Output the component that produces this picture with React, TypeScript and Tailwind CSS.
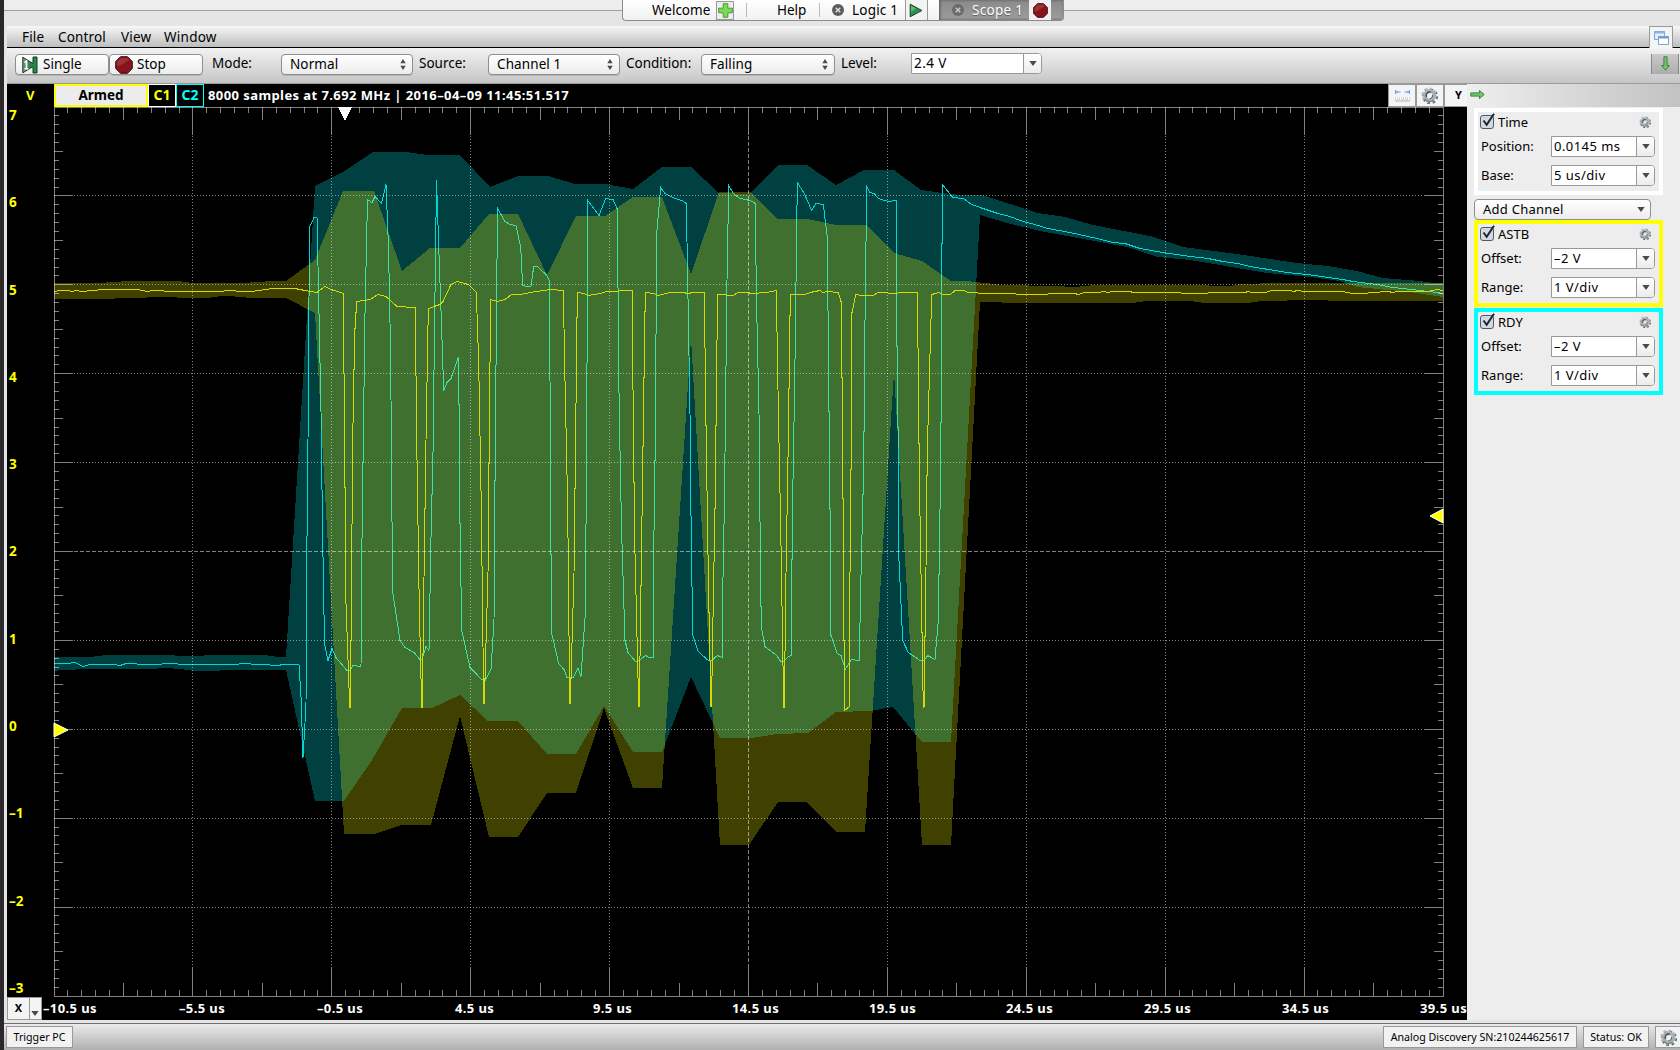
import type { ReactNode } from 'react';
import clsx from 'clsx';

const PLOT = { left: 54, top: 107, width: 1389, height: 889 };
const RIGHT = PLOT.left + PLOT.width;
const BOTTOM = PLOT.top + PLOT.height;

const rdyBand =
  '54,657 90,657 106,655 157,655 193,656 215,655 265,655 278,657 286,657 315,186 343,172 373,152 406,152 428,155 460,155 490,187 518,176 548,176 575,184 605,184 633,189 662,167 691,167 719,193 750,194 778,165 807,165 836,185 864,170 894,170 921,190 943,193 960,195 982,195 1038,213 1065,217 1093,225 1150,236 1183,247 1237,254 1297,263 1328,266 1357,271 1383,278 1420,281 1433,283 1443,283 ' +
  '1443,297 1410,292 1357,287 1340,281 1310,277 1267,273 1190,260 1157,257 1127,247 1040,231 1007,223 980,215 951,742 922,742 893,707 870,711 836,712 808,733 777,734 752,738 720,738 691,677 662,752 633,752 604,706 576,754 547,754 518,721 488,721 460,695 432,708 402,708 372,760 344,801 315,801 286,670 244,670 195,671 180,669 165,668 150,669 90,669 62,670 54,671';

const astbBand =
  '54,283 99,283 128,281 178,281 193,283 243,283 272,281 286,281 315,260 343,191 374,191 402,271 430,248 460,248 489,214 518,214 547,275 576,216 605,216 633,197 662,197 691,274 719,192 750,192 778,219 808,219 836,225 866,225 894,253 922,261 951,281 966,281 985,283 1003,285 1055,286 1075,287 1095,285 1188,285 1230,286 1240,284 1280,283 1443,283 ' +
  '1443,301 1342,301 1313,300 1262,301 1247,303 1205,303 1190,301 1147,301 1132,303 1024,303 980,302 951,845 922,845 894,372 865,832 836,832 807,802 778,802 749,845 720,845 691,338 662,788 633,788 604,708 576,793 547,793 518,837 489,837 460,716 431,825 401,825 374,834 344,834 315,313 286,298 251,298 230,296 222,296 207,298 190,298 164,297 130,298 99,299 54,299';

const rdyTrace =
  '54,663 67,663 75,662 83,666 90,664 114,664 120,665 126,663 148,664 176,663 180,664 236,664 242,663 279,665 282,664 299,664 301,696 303,757 306,705 306.5,585 308,440 309.5,227 314,217 317,217 319,313 321,411 322.5,527 324.5,643 328,660 332,648 336,657 347,670 350,670 353,665 361,666 361.7,561 363.3,440 365,313 367.5,199 372,202 375,196 381.5,203 386,184 388.5,247 390.5,347 391.5,450 392.5,590 400,640 405,647 414,652 420,659 422,659 426,646 429,650 431,537 433,453 434.5,330 436.5,180 439.3,263 441.7,330 443.7,390 447,382 451,378 458.3,357 459.3,423 460,523 461.7,630 470,667 481.7,679 485,680 491,669 494,620 495.3,440 497.5,208 505,221 510,224 516,225 520.7,247 522.7,285 526.7,286 531,286 533.7,266 537.3,266 546,274 549.5,280 550.7,517 551.7,633 558.7,663 564,669 567,677 573,677 578,668 581,676 585.3,613 586.7,440 587.7,200 599,215 605.7,198 613,199 617.5,209 618.5,363 620,450 621.5,527 625,640 628,652 635.7,661 639,660 645.7,655 649,657 653.3,657 653.7,552 655.3,440 656.7,233 660.7,187 665,193 675,198 682,200 686.3,203 687.7,280 690,413 690.7,493 692.7,635 698.3,651 708.3,660 712,660 717.3,655 722.3,657 723,577 724.5,497 727,280 728.7,185 733.3,193 740,198 750,200 755.3,203 756.3,290 759,413 760.3,553 761.3,627 765,646 776.7,655 780.7,661 784,661 787.3,657 791.3,655 792.3,520 794.7,383 797.3,182 804.3,193 811.7,210 815.7,203 823.3,204 827.3,237 828.7,380 830.3,537 831,635 837.3,653 841,655 845.3,669 851.3,659 859.3,660 860.7,587 863.7,467 865,320 866.7,186 870,192 874,193 878.3,198 888.3,201 896.3,200 896.7,320 898.3,450 899,560 902.7,640 908.3,652 920,660 924,660 927.7,655 935,659 938.3,620 940,510 941.3,397 942.3,184 952.7,197 963.3,198 971.7,204 980,207 998,213 1010,216 1020,220 1038,225 1048,228 1070,232 1097,238 1113,242 1125,243 1140,248 1163,252 1190,256 1208,258 1223,261 1238,263 1250,266 1287,272 1307,274 1343,279 1353,281 1377,284 1393,287 1420,290 1437,292 1443,293';

const astbTrace =
  '54,291 60,290 68,290 72,291 76,290 82,291 104,289 137,289 148,291 152,290 176,291 216,291 232,290 240,291 252,291 272,288 295,288 305,290 317,292 325,286 331,289 343.3,293 344.7,450 346,603 349.7,707 350.3,707 351.3,613 352.7,440 354.7,333 356.7,301 370,299 378,294 386,296 397,306 415.3,307 416.7,440 419.3,607 421.7,707 422.3,707 424,577 426,440 428.3,308 440,304 443,301 451,284 457.3,281 468.3,284 476.3,292 478.7,363 481.3,507 483.7,703 484.3,703 488,573 489.7,390 490.7,299 497.3,301 505,299 511.7,294 521,294 530,292 550,289 563.3,290 565,380 567.7,507 569.7,703 570.3,703 574,573 575.7,430 577.3,292 584,293 588.3,295 600,293 606.7,291 632.3,290 633.3,430 635,553 638.7,706 639.3,706 641.7,537 644.3,357 645.3,292 654,293 658.3,295 670,292 683,292 688,293 693,292 704.3,292 706.3,447 708.7,597 711,706 711.5,706 713.3,600 715.3,493 716.7,360 717.7,294 725,294 727,295 733,295 738,292 747,292 752,293 767,292 776.3,290 778.3,407 780.7,527 783.7,707 784.3,707 786,573 788.3,440 790.3,294 805,294 810,292 820,290 823,292 827,291 838.3,292 841.3,302 842.7,450 843.7,607 844.7,710 849.3,706 850,573 851.3,440 852,312 855.7,294 863,295 873,295 878,292 897,293 899,292 917.3,292 918.3,370 919.3,473 923.3,707 924,707 926,567 927.3,450 931.7,294 939,292 943,294 950.7,294 955,290 964,290 968,292 987,293 1010,293 1022,294 1075,293 1078,294 1085,292 1098,292 1104,291 1108,292 1112,291 1130,291 1133,292 1178,292 1184,293 1205,293 1212,292 1245,292 1248,291 1252,292 1266,292 1271,290 1290,290 1294,291 1297,290 1305,291 1343,291 1352,293 1365,293 1372,292 1388,291 1393,292 1397,291 1428,291 1437,289 1443,290';

const voltLabels = ['7', '6', '5', '4', '3', '2', '1', '0', '–1', '–2', '–3'];
const timeLabels = ['–10.5', '–5.5', '–0.5', '4.5', '9.5', '14.5', '19.5', '24.5', '29.5', '34.5', '39.5'];

const tick = (index: number, minor: number, middle: number, major: number) => {
  if (index % 10 === 0) return major;
  return index % 5 === 0 ? middle : minor;
};

const Graticule = () => {
  let ticks = '';
  for (let i = 1; i < 100; i++) {
    const x = Math.floor(PLOT.left + (i * PLOT.width) / 100) + 0.5;
    const y = Math.floor(PLOT.top + (i * PLOT.height) / 100) + 0.5;
    const tall = tick(i, 6, 13, 28);
    const wide = tick(i, 5, 9, 19);
    ticks += `M${x} ${PLOT.top}v${tall}M${x} ${BOTTOM}v${-tall}`;
    ticks += `M${PLOT.left} ${y}h${wide}M${RIGHT} ${y}h${-wide}`;
  }
  const lines = [1, 2, 3, 4, 5, 6, 7, 8, 9];
  return (
    <g fill="none" stroke="#ffffff" strokeOpacity={0.5}>
      <path d={ticks} />
      <rect x={PLOT.left + 0.5} y={PLOT.top + 0.5} width={PLOT.width} height={PLOT.height} />
      {lines.map((n) => {
        const x = Math.floor(PLOT.left + (n * PLOT.width) / 10) + 0.5;
        const y = Math.floor(PLOT.top + (n * PLOT.height) / 10) + 0.5;
        const dash = n === 5 ? '4 2' : '1 2';
        return (
          <g key={n} strokeDasharray={dash}>
            <line x1={x} x2={x} y1={PLOT.top + 29} y2={BOTTOM - 28} />
            <line x1={PLOT.left + 20} x2={RIGHT - 19} y1={y} y2={y} />
          </g>
        );
      })}
    </g>
  );
};

const Waveforms = () => (
  <svg className="block" width="1460" height="890" viewBox="7 107 1460 890" shapeRendering="crispEdges">
    <polygon points={rdyBand} fill="#00ffff" fillOpacity={0.25} />
    <polyline points={rdyTrace} fill="none" stroke="#00d8d8" transform="translate(0 .5)" />
    <polygon points={astbBand} fill="#ffff00" fillOpacity={0.25} />
    <polyline points={astbTrace} fill="none" stroke="#d6dc00" transform="translate(0 .5)" />
    <Graticule />
    <polygon points="338,107 352,107 345,121" fill="#ffffff" />
    <g shapeRendering="auto">
      <polygon points="54,723 68,730 54,737" fill="#ffff00" stroke="#ffffff" strokeWidth="1" />
      <polygon points="1443,509 1430,516 1443,523" fill="#ffff00" stroke="#ffffff" strokeWidth="1" />
    </g>
  </svg>
);

const Gear = ({ size }: { size: number }) => (
  <svg width={size} height={size} viewBox="0 0 16 16" fill="none">
    <circle cx="8.6" cy="8.8" r="6.400" stroke="#6c7478" strokeWidth="2.200" strokeDasharray="2.600 2.430" />
    <circle cx="7.600" cy="7.600" r="6.200" stroke="#b4babd" strokeWidth="2" strokeDasharray="2.600 2.270" />
    <circle cx="8" cy="8" r="4.400" stroke="#a8b0b4" strokeWidth="3.200" />
    <path d="M5.300 9.400A3 3 0 0 1 9.200 5.200" stroke="#4b5458" strokeWidth="1.500" />
    <path d="M10.900 7.500A2.900 2.900 0 0 1 8 10.900" stroke="#5f686c" strokeWidth="1" />
    <path d="M3.500 11.500A5.600 5.600 0 0 0 12 12" stroke="#6c7478" strokeWidth="1" />
  </svg>
);

const StopSign = ({ size }: { size: number }) => (
  <svg width={size} height={size} viewBox="0 0 18 18">
    <path d="M5.5.7h7l4.800 4.800v7l-4.800 4.800h-7L.7 12.500v-7z" fill="#8a1219" stroke="#35100f" />
    <path d="M5.900 1.900h6.200l2 2.100-10.300 6.600-1.900-1.600V6z" fill="#a8474b" opacity="0.6" />
  </svg>
);

const PlayIcon = () => (
  <svg width="14" height="15" viewBox="0 0 14 15">
    <path d="M1.200 1.200 12.800 7.500 1.200 13.800z" fill="#27944a" stroke="#163c22" />
    <path d="M2 2.500 7 5.300 2 9z" fill="#8cc79c" opacity="0.6" />
  </svg>
);

const SingleIcon = () => (
  <svg width="16" height="18" viewBox="0 0 16 18">
    <path d="M.8 1.200 11 7.500V1h4v16h-4v-6.500L.8 16.800z" fill="#27894a" stroke="#173822" />
    <path d="M1.300 2 6 5v8l-4.700 3z" fill="#6e8f76" />
    <path d="M2.500 6.500 4.500 5v7.500M2.500 12.700h4" stroke="#ffffff" strokeWidth="1.600" fill="none" />
  </svg>
);

const CloseDot = () => (
  <svg width="12" height="12" viewBox="0 0 12 12">
    <circle cx="6" cy="6" r="6" fill="#5c5c5c" />
    <path d="m3.700 3.700 4.600 4.600m0-4.600-4.600 4.600" stroke="#e6e6e6" strokeWidth="1.300" />
  </svg>
);

const GreenArrow = ({ down }: { down?: boolean }) => (
  <svg width="15" height="15" viewBox="0 0 15 15" className={clsx(down && 'rotate-90')}>
    <path d="M.8 5.900h8.700V3.500L14.200 7.500 9.500 11.500V9.100H.8z" fill="#74c46a" stroke="#3a8440" />
  </svg>
);

const Caret = () => (
  <svg width="8" height="5" viewBox="0 0 8 5">
    <path d="M.3 0h7.400L4 5z" fill="#4a4a4a" />
  </svg>
);

const Steppers = () => (
  <svg width="6" height="11" viewBox="0 0 6 11" className="ml-auto">
    <path d="M3 0 5.700 4.200H.3zM3 11 5.700 6.800H.3z" fill="#4a4a4a" />
  </svg>
);

const Select = ({ value, className }: { value: string; className: string }) => (
  <div
    className={clsx(
      'flex h-[21px] items-center rounded-[4px] border border-[#8e8e8e] bg-gradient-to-b from-white to-[#ececec] pr-[6px] pl-2 shadow-[0_1px_0_#b4b4b4]',
      className
    )}
  >
    <span className="pb-px tracking-[0.1px]">{value}</span>
    <Steppers />
  </div>
);

const Combo = ({ value, className }: { value: string; className: string }) => (
  <div className={clsx('flex h-[21px] rounded-r-[4px] border border-[#999999] bg-white', className)}>
    <span className="flex flex-1 items-center pb-px pl-[2px] tracking-[0.45px] whitespace-nowrap">{value}</span>
    <span className="flex w-[18px] items-center justify-center rounded-r-[3px] border-l border-[#999999] bg-gradient-to-b from-white to-[#ececec]">
      <Caret />
    </span>
  </div>
);

const Tabs = () => (
  <div className="absolute top-0 left-[622px] flex h-[21px] w-[442px] items-center overflow-hidden rounded-b-[4px] border border-t-0 border-[#8c8c8c] bg-gradient-to-b from-white to-[#f1f1f1]">
    <span className="ml-[29px] w-[64px]">Welcome</span>
    <span className="flex h-[19px] w-[18px] items-center justify-center border border-[#999999] bg-[#ededed]">
      <svg width="15" height="15" viewBox="0 0 15 15">
        <path d="M5.200.7h4.600v4.500h4.500v4.600H9.800v4.500H5.200V9.800H.7V5.200h4.500z" fill="#7ed957" stroke="#4a9a35" />
      </svg>
    </span>
    <span className="ml-3 h-[14px] w-px bg-[#bbbbbb]" />
    <span className="ml-[30px] w-[42px]">Help</span>
    <span className="h-[14px] w-px bg-[#bbbbbb]" />
    <span className="ml-3">
      <CloseDot />
    </span>
    <span className="ml-2 w-[53px] tracking-[0.2px] whitespace-nowrap">Logic 1</span>
    <span className="flex h-full w-[23px] items-center justify-center border-x border-[#999999] bg-[#f2f2f2] pr-px">
      <PlayIcon />
    </span>
    <div className="ml-auto flex h-full w-[124px] items-center bg-gradient-to-b from-[#8a8a8a] to-[#9c9c9c] shadow-[inset_1px_0_3px_#555555]">
      <span className="ml-[13px] opacity-70">
        <CloseDot />
      </span>
      <span className="ml-2 w-[57px] tracking-[0.3px] whitespace-nowrap text-white [text-shadow:0_1px_1px_#555555]">
        Scope 1
      </span>
      <span className="flex h-full w-[22px] items-center justify-center bg-[#f0f0f0]">
        <StopSign size={15} />
      </span>
    </div>
  </div>
);

const MenuBar = () => (
  <div className="ml-[7px] flex h-[22px] items-center border-b border-black bg-gradient-to-b from-[#f8f8f8] to-[#bdbdbd] pl-[15px] tracking-[0.15px]">
    <span className="w-9">File</span>
    <span className="w-[63px]">Control</span>
    <span className="w-[43px]">View</span>
    <span className="tracking-[0.25px]">Window</span>
    <span className="mt-px mr-[7px] ml-auto flex h-[22px] w-6 items-center justify-center border border-b-0 border-[#999999] bg-[#f4f4f4]">
      <svg width="15" height="14" viewBox="0 0 15 14">
        <path d="M.5.5h10v8H.5z" fill="#e4edf8" stroke="#7ba3d6" />
        <path d="M.5.5h10v2H.5z" fill="#8db4e4" />
        <path d="M4.500 5.500h10v8h-10z" fill="#ffffff" stroke="#7ba3d6" />
        <path d="M4.500 5.500h10v2h-10z" fill="#6d9cd8" />
      </svg>
    </span>
  </div>
);

const ToolBar = () => (
  <div className="ml-[7px] flex h-9 items-start border-b border-[#9a9a9a] bg-gradient-to-b from-[#f2f2f2] to-[#c6c6c6] pt-[6px] pl-2">
    <div className="flex h-[21px] w-[94px] items-center rounded-[4px] border border-[#8e8e8e] bg-gradient-to-b from-white to-[#ececec] pl-[6px] shadow-[0_1px_0_#b4b4b4]">
      <SingleIcon />
      <span className="ml-[5px] pb-px">Single</span>
    </div>
    <div className="flex h-[21px] w-[94px] items-center rounded-[4px] border border-[#8e8e8e] bg-gradient-to-b from-white to-[#ececec] pl-[5px] shadow-[0_1px_0_#b4b4b4]">
      <StopSign size={18} />
      <span className="ml-1 pb-px">Stop</span>
    </div>
    <span className="-mt-px ml-[9px] w-[69px]">Mode:</span>
    <Select value="Normal" className="w-[132px]" />
    <span className="-mt-px ml-[6px] w-[69px]">Source:</span>
    <Select value="Channel 1" className="w-[132px]" />
    <span className="-mt-px ml-[6px] w-[75px]">Condition:</span>
    <Select value="Falling" className="w-[134px]" />
    <span className="-mt-px ml-[6px] w-[70px]">Level:</span>
    <Combo value="2.4 V" className="-mt-px w-[131px]" />
    <span className="mr-px ml-auto flex h-5 w-[28px] items-center justify-center border-x border-[#888888] bg-gradient-to-b from-[#c9c9c9] to-[#adadad] pb-[2px]">
      <GreenArrow down />
    </span>
  </div>
);

const PlotHeader = () => (
  <div className="flex h-[23px] items-center font-bold">
    <span className="w-[47px] pb-px pl-[19px] text-[13px] text-[#ffff00]">V</span>
    <span className="flex h-full w-[94px] items-center justify-center border-2 border-[#ffff00] bg-[#ececec] pb-px text-[13.5px] text-black">
      Armed
    </span>
    <span className="flex h-full w-7 items-center justify-center border border-white pb-px text-[14px] text-[#ffff00]">
      C1
    </span>
    <span className="flex h-full w-7 items-center justify-center border border-[#00ffff] pb-px text-[14px] text-[#00ffff]">
      C2
    </span>
    <span className="ml-1 pb-[2px] text-[13px] tracking-[0.42px] whitespace-nowrap text-white">
      8000 samples at 7.692 MHz | 2016–04–09 11:45:51.517
    </span>
    <span className="ml-auto flex h-full w-7 items-center justify-center border border-[#999999] bg-[#f4f4f4]">
      <svg width="15" height="12" viewBox="0 0 15 12">
        <path d="M.5 0v4M14.500 0v4M1 2h4.500M9.500 2H14" stroke="#6a9fe8" />
        <path d="M2.500.5v3L.8 2zM12.500.5v3L14.200 2z" fill="#6a9fe8" />
        <path d="M0 7h15v5H0z" fill="#d4d4d4" />
        <path d="M1.500 7v3M3.500 7v2M5.500 7v3M7.500 7v2M9.500 7v3M11.500 7v2M13.500 7v3" stroke="#ffffff" />
      </svg>
    </span>
    <span className="flex h-full w-7 items-center justify-center border border-[#999999] bg-[#f4f4f4] pr-[2px] pb-px">
      <Gear size={17} />
    </span>
    <span className="flex h-full w-[23px] items-center justify-center border border-r-0 border-[#999999] bg-[#f4f4f4] pb-px pl-[5px] text-[11px] text-black">
      Y
    </span>
  </div>
);

const TimeAxis = () => (
  <div className="flex h-[23px] text-[13px] font-bold text-white">
    <div className="flex w-[35px] border border-[#999999] bg-[#f4f4f4] text-[11px] text-black">
      <span className="flex w-[22px] items-center justify-center border-r border-[#999999] pb-px">X</span>
      <span className="flex flex-1 items-end justify-center pb-[3px]">
        <Caret />
      </span>
    </div>
    <div className="ml-px grid grid-cols-[136px_138px_138px_138px_139px_137px_137px_138px_138px_138px_50px] items-center overflow-hidden pb-[2px] tracking-[0.4px] whitespace-nowrap">
      {timeLabels.map((label) => (
        <span key={label}>{label} us</span>
      ))}
    </div>
  </div>
);

const Scope = () => (
  <div className="w-[1460px] overflow-hidden bg-black">
    <PlotHeader />
    <div className="relative h-[890px]">
      <Waveforms />
      <div className="absolute top-0 left-[2px] flex h-[889px] flex-col justify-between text-[13.5px] leading-4 font-bold text-[#ffff00]">
        {voltLabels.map((label) => (
          <span key={label}>{label}</span>
        ))}
      </div>
    </div>
    <TimeAxis />
  </div>
);

const Field = ({ label, value }: { label: string; value: string }) => (
  <div className="flex h-[21px] items-center pl-[3px]">
    <span className="w-[70px] pb-[2px]">{label}</span>
    <Combo value={value} className="w-[104px]" />
  </div>
);

const Group = ({ title, className, children }: { title: string; className: string; children: ReactNode }) => (
  <div className={clsx('h-[87px] w-[189px] border-4', className)}>
    <div className="flex h-[19px] items-center pl-[2px]">
      <svg width="16" height="17" viewBox="0 0 16 17">
        <rect x="0.500" y="2.500" width="13" height="13" rx="2.500" fill="#d3dae4" stroke="#4d5866" />
        <path d="m3.500 7.500 3.200 4.300L14 .8" fill="none" stroke="#1c2530" strokeWidth="2" />
      </svg>
      <span className="ml-[2px]">{title}</span>
      <span className="mr-2 ml-auto">
        <Gear size={12} />
      </span>
    </div>
    <div className="mt-[5px] flex flex-col gap-2">{children}</div>
  </div>
);

const SidePanel = () => (
  <div className="flex-1 bg-[#ededed] text-[13px]">
    <div className="flex h-[23px] items-center bg-gradient-to-r from-[#efefef] to-[#c2c2c2] pb-[3px] pl-[3px]">
      <GreenArrow />
    </div>
    <div className="pt-px pl-[7px]">
      <Group title="Time" className="border-white">
        <Field label="Position:" value="0.0145 ms" />
        <Field label="Base:" value="5 us/div" />
      </Group>
      <div className="mt-1 flex h-[21px] w-[177px] items-center justify-between rounded-[4px] border border-[#8e8e8e] bg-gradient-to-b from-white to-[#ececec] pr-[5px] pb-px pl-2 tracking-[0.25px]">
        Add Channel
        <Caret />
      </div>
      <Group title="ASTB" className="border-[#ffff00]">
        <Field label="Offset:" value="–2 V" />
        <Field label="Range:" value="1 V/div" />
      </Group>
      <Group title="RDY" className="mt-px border-[#00ffff]">
        <Field label="Offset:" value="–2 V" />
        <Field label="Range:" value="1 V/div" />
      </Group>
    </div>
  </div>
);

const StatusBar = () => (
  <div className="flex h-[27px] items-start border-t border-[#6f6f6f] bg-gradient-to-b from-[#ebebeb] to-[#b0b0b0] pt-[2px] pl-[2px] text-[10.65px]">
    <span className="flex h-[22px] w-[67px] items-center justify-center border border-[#999999] bg-[#f2f2f2]">Trigger PC</span>
    <span className="ml-auto flex h-[22px] w-[194px] items-center justify-center border border-[#999999] bg-[#f2f2f2] whitespace-nowrap">
      Analog Discovery SN:210244625617
    </span>
    <span className="ml-[6px] flex h-[22px] w-[66px] items-center justify-center border border-[#999999] bg-[#f2f2f2]">Status: OK</span>
    <span className="ml-[6px] flex h-[22px] w-[25px] items-center justify-center border border-r-0 border-[#999999] bg-[#f2f2f2]">
      <Gear size={17} />
    </span>
  </div>
);

const App = () => (
  <div className="h-[1050px] w-[1680px] overflow-hidden bg-[#2a282b] pl-1 font-['Noto_Sans',sans-serif] text-[13.5px] leading-5 text-black">
    <div className="h-full bg-[#e5e5e5]">
      <div className="h-[26px]">
        <div className="h-[11px] border-b border-[#a0a0a0] bg-[#ededed]" />
        <Tabs />
      </div>
      <div className="-ml-1">
        <MenuBar />
        <ToolBar />
        <div className="flex h-[936px] pl-[7px]">
          <Scope />
          <SidePanel />
        </div>
      </div>
      <div className="h-[3px]" />
      <StatusBar />
    </div>
  </div>
);

export default App;
